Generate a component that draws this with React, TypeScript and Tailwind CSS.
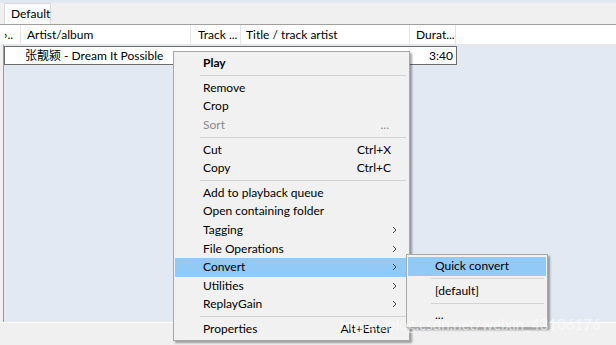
import React from 'react';

type Item =
  | { kind: 'sep' }
  | { kind: 'item'; label: string; shortcut?: string; sub?: boolean; bold?: boolean; disabled?: boolean; active?: boolean };

const menuItems: Item[] = [
  { kind: 'item', label: 'Play', bold: true },
  { kind: 'sep' },
  { kind: 'item', label: 'Remove' },
  { kind: 'item', label: 'Crop' },
  { kind: 'item', label: 'Sort', shortcut: '...', disabled: true },
  { kind: 'sep' },
  { kind: 'item', label: 'Cut', shortcut: 'Ctrl+X' },
  { kind: 'item', label: 'Copy', shortcut: 'Ctrl+C' },
  { kind: 'sep' },
  { kind: 'item', label: 'Add to playback queue' },
  { kind: 'item', label: 'Open containing folder' },
  { kind: 'item', label: 'Tagging', sub: true },
  { kind: 'item', label: 'File Operations', sub: true },
  { kind: 'item', label: 'Convert', sub: true, active: true },
  { kind: 'item', label: 'Utilities', sub: true },
  { kind: 'item', label: 'ReplayGain', sub: true },
  { kind: 'sep' },
  { kind: 'item', label: 'Properties', shortcut: 'Alt+Enter' },
];

const columns = [
  { label: '›..', w: 'w-[21px]', pad: 'pl-[4px]' },
  { label: 'Artist/album', w: 'w-[170px]', pad: 'pl-[6px]' },
  { label: 'Track ...', w: 'w-[50px]', pad: 'pl-[7px]' },
  { label: 'Title / track artist', w: 'w-[169px]', pad: 'pl-[5px]' },
  { label: 'Durat...', w: 'w-[46px]', pad: 'pl-[6px]' },
];

function Chevron() {
  return (
    <svg width="6" height="8" viewBox="0 0 6 8" className="text-[#444]">
      <path d="M1 1 L4 4 L1 7" fill="none" stroke="currentColor" strokeWidth="1" />
    </svg>
  );
}

function Separator({ left }: { left: string }) {
  return (
    <div className="h-[6px] flex items-center">
      <div className={`${left} mr-[2px] flex-1 h-[1px] bg-[#d4d4d4]`} />
    </div>
  );
}

export default function App() {
  return (
    <div
      className="relative w-[616px] h-[345px] overflow-hidden bg-[#f0f0f0] text-[12px] text-black flex flex-col"
      style={{ fontFamily: 'Lato, "Noto Sans CJK SC", sans-serif' }}
    >
      <div className="h-[3px] bg-[#e1e7ef]" />

      {/* tab strip */}
      <div className="h-[21px] pl-[4px] flex items-end">
        <div className="h-[21px] w-[47px] bg-[#fbfbfb] border border-b-0 border-[#dadada] flex items-center pl-[6px] leading-none">
          Default
        </div>
      </div>

      {/* playlist */}
      <div className="flex-1 flex flex-col border-t border-[#a0a0a0]">
        <div className="h-[20px] bg-white flex border-b border-[#e8e8e8]">
          {columns.map((c) => (
            <div
              key={c.label}
              className={`${c.w} ${c.pad} shrink-0 border-r border-[#e5e5e5] flex items-center leading-none whitespace-nowrap overflow-hidden`}
            >
              {c.label}
            </div>
          ))}
          <div className="flex-1" />
        </div>
        <div className="flex-1 ml-[3px] bg-[#e2e9f2] border-l border-[#9a9a9a] pt-[1px]">
          <div className="w-[453px] h-[19px] bg-white border border-[#6d6d6d] flex items-center justify-between pl-[20px] pr-[3px] leading-none">
            <span>张靓颍 - Dream It Possible</span>
            <span>3:40</span>
          </div>
        </div>
        <div className="h-[23px] border-t border-white bg-[#f0f0f0]" />
      </div>

      {/* context menu */}
      <div className="absolute left-[173px] top-[51px] w-[237px] bg-[#f1f1f1] border border-[#a8a8a8] py-[2px] px-[1px] shadow-[2px_2px_2px_rgba(0,0,0,0.35)]">
        {menuItems.map((it, i) =>
          it.kind === 'sep' ? (
            <Separator key={i} left="ml-[25px]" />
          ) : (
            <div
              key={i}
              className={`h-[18.6px] flex items-center pl-[28px] pr-[10px] leading-none whitespace-nowrap ${
                it.active ? 'bg-[#91c9f7]' : ''
              } ${it.disabled ? 'text-[#8a8a8a]' : ''} ${it.bold ? 'font-bold' : ''}`}
            >
              <span className="flex-1">{it.label}</span>
              {it.shortcut && (
                <span className={it.shortcut === '...' ? 'mr-[9px] text-[#8a8a8a]' : 'mr-[7px]'}>{it.shortcut}</span>
              )}
              {it.sub && <Chevron />}
            </div>
          ),
        )}
      </div>

      {/* submenu */}
      <div className="absolute left-[406px] top-[254px] w-[142px] bg-[#f1f1f1] border border-[#a8a8a8] py-[2px] px-[1px] shadow-[2px_2px_2px_rgba(0,0,0,0.35)]">
        <div className="h-[18.6px] bg-[#91c9f7] flex items-center pl-[27px] leading-none">Quick convert</div>
        <Separator left="ml-[23px]" />
        <div className="h-[18.6px] flex items-center pl-[27px] leading-none">[default]</div>
        <Separator left="ml-[23px]" />
        <div className="h-[18.6px] flex items-center pl-[27px] leading-none">...</div>
      </div>

      {/* watermark */}
      <div className="absolute left-[340px] top-[317px] text-[15px] text-white/60 whitespace-nowrap leading-none">
        https://blog.csdn.net/weixin_43106176
      </div>
    </div>
  );
}
